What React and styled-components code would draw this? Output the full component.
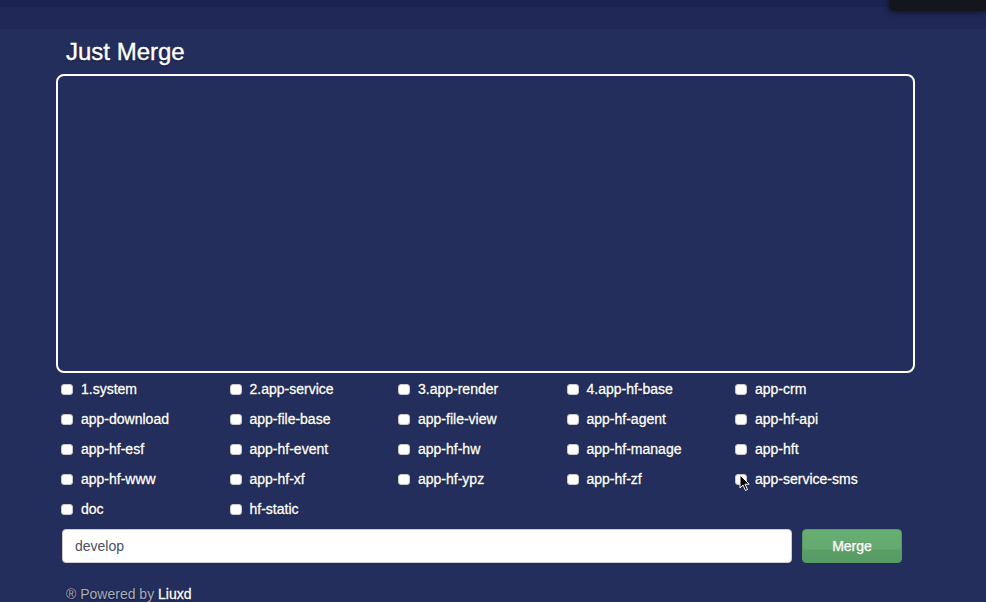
import styled, { createGlobalStyle } from "styled-components";

const repos = [
  "1.system",
  "2.app-service",
  "3.app-render",
  "4.app-hf-base",
  "app-crm",
  "app-download",
  "app-file-base",
  "app-file-view",
  "app-hf-agent",
  "app-hf-api",
  "app-hf-esf",
  "app-hf-event",
  "app-hf-hw",
  "app-hf-manage",
  "app-hft",
  "app-hf-www",
  "app-hf-xf",
  "app-hf-ypz",
  "app-hf-zf",
  "app-service-sms",
  "doc",
  "hf-static",
];

export default function App() {
  return (
    <>
      <GlobalStyle />
      <TopStrip />
      <NavBar>
        <Popover />
      </NavBar>
      <Main>
        <Title>Just Merge</Title>
        <LogArea readOnly />
        <RepoGrid>
          {repos.map((name) => (
            <RepoLabel key={name}>
              <CheckBox type="checkbox" />
              <span>{name}</span>
              {name === "app-service-sms" && (
                <Cursor viewBox="0 0 12 18" width="12" height="18">
                  <path
                    d="M1 1 L1 14 L4 11 L6.5 16.5 L8.5 15.5 L6 10.2 L10.2 10.2 Z"
                    fill="#000"
                    stroke="#fff"
                    strokeWidth="1"
                    strokeLinejoin="round"
                  />
                </Cursor>
              )}
            </RepoLabel>
          ))}
        </RepoGrid>
        <MergeRow>
          <BranchInput defaultValue="develop" />
          <MergeButton>Merge</MergeButton>
        </MergeRow>
        <Footer>
          ® Powered by <strong>Liuxd</strong>
        </Footer>
      </Main>
    </>
  );
}

const GlobalStyle = createGlobalStyle`
  html, body {
    margin: 0;
    padding: 0;
    background: #232e5c;
    font-family: "Liberation Sans", Arial, sans-serif;
    overflow: hidden;
  }
`;

const TopStrip = styled.div`
  height: 7px;
  background: #1b2351;
`;

const NavBar = styled.div`
  position: relative;
  height: 22px;
  background: #1f2857;
`;

const Popover = styled.div`
  position: absolute;
  top: -7px;
  right: 0;
  width: 97px;
  height: 11px;
  background: #14161e;
  border-bottom-left-radius: 5px;
  box-shadow: 0 1px 6px rgba(0, 0, 0, 0.6);
`;

const Main = styled.div`
  padding-left: 56px;
  width: 859px;
`;

const Title = styled.h1`
  margin: 10px 0 9px 10px;
  font-size: 24px;
  line-height: 26px;
  font-weight: normal;
  color: #fff;
  -webkit-text-stroke: 0.4px #fff;
  text-shadow: 0 1px 2px rgba(0, 0, 0, 0.6);
`;

const LogArea = styled.textarea`
  display: block;
  box-sizing: border-box;
  width: 859px;
  height: 299px;
  margin: 0;
  border: 2px solid #fff;
  border-radius: 8px;
  background: transparent;
  resize: none;
  outline: none;
`;

const RepoGrid = styled.div`
  display: grid;
  grid-template-columns: repeat(5, 168.5px);
  grid-auto-rows: 30px;
  padding: 1px 0 0 5px;
`;

const RepoLabel = styled.label`
  position: relative;
  display: flex;
  align-items: center;
  gap: 8px;
  font-size: 14px;
  color: #fff;
  -webkit-text-stroke: 0.3px #fff;
  text-shadow: 0 1px 1px rgba(0, 0, 0, 0.55);
`;

const CheckBox = styled.input`
  appearance: none;
  box-sizing: border-box;
  width: 12px;
  height: 11px;
  margin: 0;
  background: #fff;
  border: 1px solid #c8c8c8;
  border-radius: 3px;
`;

const Cursor = styled.svg`
  position: absolute;
  left: 4px;
  top: 10px;
`;

const MergeRow = styled.div`
  display: flex;
  gap: 10px;
  margin: 5px 0 0 6px;
`;

const BranchInput = styled.input`
  box-sizing: border-box;
  width: 730px;
  height: 34px;
  padding: 0 12px;
  border: 1px solid #ccc;
  border-radius: 4px;
  background: #fff;
  font-family: "Liberation Sans", Arial, sans-serif;
  font-size: 14px;
  color: #4a4f63;
  outline: none;
`;

const MergeButton = styled.button`
  box-sizing: border-box;
  width: 100px;
  height: 34px;
  border: 1px solid #559a62;
  border-radius: 4px;
  background: linear-gradient(#67ae72 0%, #64aa6f 60%, #5a9e67 62%, #579a64 100%);
  font-family: "Liberation Sans", Arial, sans-serif;
  font-size: 14px;
  color: #fff;
  -webkit-text-stroke: 0.3px #fff;
  text-shadow: 0 -1px 0 rgba(0, 0, 0, 0.25);
`;

const Footer = styled.div`
  margin: 21px 0 0 10px;
  font-size: 14px;
  line-height: 20px;
  color: #a9adbd;
  text-shadow: 0 1px 2px rgba(0, 0, 0, 0.6);

  strong {
    color: #fff;
    font-weight: normal;
    -webkit-text-stroke: 0.3px #fff;
  }
`;
